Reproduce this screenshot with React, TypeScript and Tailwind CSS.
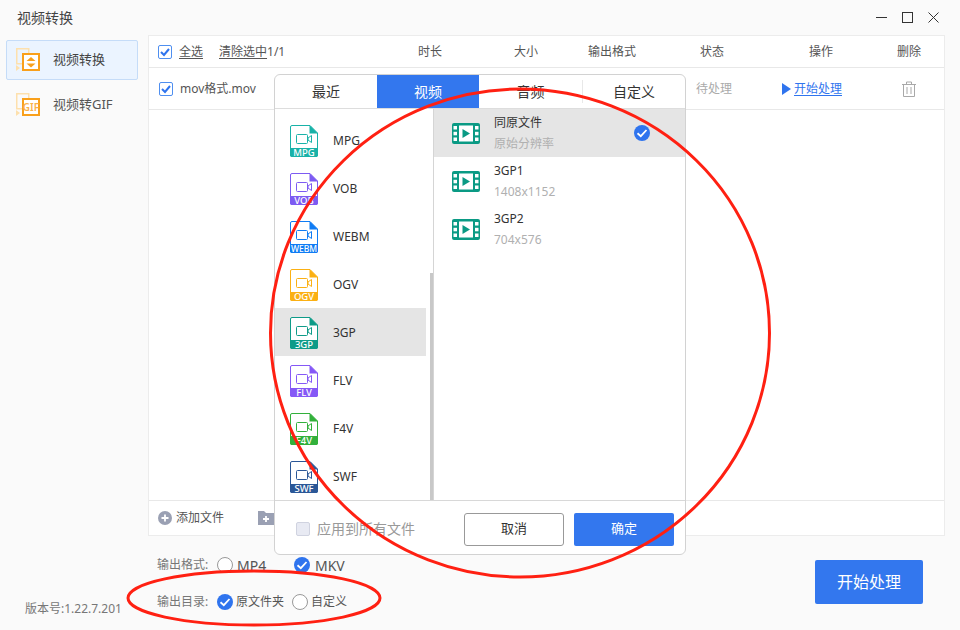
const fontStack = `font-['Noto_Sans','Noto_Sans_CJK_SC',sans-serif]`;

const formats = [
  { name: "MPG", color: "#19b2a8" },
  { name: "VOB", color: "#7d5bf2" },
  { name: "WEBM", color: "#0f7cf4" },
  { name: "OGV", color: "#fbb013" },
  { name: "3GP", color: "#0e9b88", active: true },
  { name: "FLV", color: "#8558f6" },
  { name: "F4V", color: "#32b03b" },
  { name: "SWF", color: "#2b5797" },
];

const presets = [
  { title: "同原文件", sub: "原始分辨率", selected: true },
  { title: "3GP1", sub: "1408x1152" },
  { title: "3GP2", sub: "704x576" },
];

const FileIcon = ({ name, color }: { name: string; color: string }) => (
  <svg width="28" height="32" viewBox="0 0 28 32" className="shrink-0">
    <path d="M2 .5H20L27.5 8V30A1.5 1.5 0 0 1 26 31.5H2A1.5 1.5 0 0 1 .5 30V2A1.5 1.5 0 0 1 2 .5Z" fill="#fff" stroke={color} />
    <path d="M19.5 0L28 8.5H19.5Z" fill={color} />
    <path d="M0 23H28V30A2 2 0 0 1 26 32H2A2 2 0 0 1 0 30Z" fill={color} />
    <rect x="6.5" y="9.5" width="11" height="9" rx="1" fill="none" stroke={color} />
    <path d="M18 13L21.5 10.5V17.5L18 15Z" fill="none" stroke={color} />
    <text x="14" y="30.5" textAnchor="middle" fontSize={name.length > 3 ? 8.5 : 9.5} fontWeight="500" fill="#fff" fontFamily="Noto Sans">
      {name}
    </text>
  </svg>
);

const FilmIcon = () => (
  <svg width="28" height="21" viewBox="0 0 28 21" className="shrink-0">
    <rect width="28" height="21" rx="2" fill="#0a9a84" />
    <rect x="7" y="2.5" width="14" height="16" fill="#fff" />
    <path d="M10.5 6L18 10.500L10.500 15Z" fill="#0a9a84" />
    <rect x="1.500" y="3" width="3.500" height="3.500" fill="#fff" />
    <rect x="1.500" y="8.800" width="3.500" height="3.500" fill="#fff" />
    <rect x="1.500" y="14.500" width="3.500" height="3.500" fill="#fff" />
    <rect x="23" y="3" width="3.500" height="3.500" fill="#fff" />
    <rect x="23" y="8.800" width="3.500" height="3.500" fill="#fff" />
    <rect x="23" y="14.500" width="3.500" height="3.500" fill="#fff" />
  </svg>
);

const CheckBox = () => (
  <span className="flex w-[14px] h-[14px] shrink-0 items-center justify-center bg-white border border-[#4f8ff0] rounded-[2px]">
    <svg width="10" height="10" viewBox="0 0 10 10">
      <path d="M1 5L4 8L9 2" fill="none" stroke="#2f74ee" strokeWidth="2" />
    </svg>
  </span>
);

const Radio = ({ checked }: { checked?: boolean }) =>
  checked ? (
    <svg width="16" height="16" viewBox="0 0 16 16" className="shrink-0">
      <circle cx="8" cy="8" r="8" fill="#2f74ee" />
      <path d="M3.500 8.300L6.800 11.200L12.500 5" fill="none" stroke="#fff" strokeWidth="1.800" />
    </svg>
  ) : (
    <span className="w-[16px] h-[16px] shrink-0 rounded-full bg-white border border-[#999]" />
  );

const SideIcon = ({ gif }: { gif?: boolean }) => (
  <svg width="24" height="24" viewBox="0 0 24 24" className="shrink-0">
    <rect x=".75" y=".75" width="12" height="15" fill="none" stroke="#fde0ad" strokeWidth="1.500" />
    <path d="M0 17L4 20L0 23Z" fill="#fde0ad" />
    <rect x="7" y="6" width="16" height="16" fill="#fff" stroke="#f9a01b" strokeWidth="2" />
    {gif ? (
      <text x="15" y="18" textAnchor="middle" fontSize="10" fontWeight="600" fill="#f9b04a" fontFamily="Noto Sans">
        GIF
      </text>
    ) : (
      <>
        <path d="M15 9L19.500 13H10.500ZM15 19.500L10.500 15.500H19.500Z" fill="#f9a01b" />
      </>
    )}
  </svg>
);

const tableCols = "grid grid-cols-[228px_106px_86px_86px_114px_104px_72px] items-center";

export default function App() {
  return (
    <div className={`relative w-[960px] h-[630px] overflow-hidden bg-[#fafafa] flex flex-col text-[#555] ${fontStack}`}>
      {/* title bar */}
      <div className="h-[35px] shrink-0 flex items-center justify-between pl-[17px] pr-[21px]">
        <span className="text-[14px] text-[#444]">视频转换</span>
        <div className="flex items-center gap-[15px]">
          <span className="w-[11px] h-[1px] bg-[#333]" />
          <span className="w-[11px] h-[11px] border border-[#333]" />
          <svg width="11" height="11" viewBox="0 0 11 11">
            <path d="M.5 .5L10.500 10.500M10.500 .5L.5 10.500" stroke="#333" fill="none" />
          </svg>
        </div>
      </div>

      <div className="flex h-[501px] shrink-0">
        {/* sidebar */}
        <div className="w-[148px] shrink-0 pl-[6px] pr-[10px] pt-[5px] flex flex-col gap-[5px]">
          <div className="h-[40px] flex items-center gap-[13px] pl-[9px] bg-[#ebf4ff] border border-[#c5dcf8] rounded-[2px]">
            <SideIcon />
            <span className="text-[13px] text-[#444]">视频转换</span>
          </div>
          <div className="h-[40px] flex items-center gap-[13px] pl-[10px]">
            <SideIcon gif />
            <span className="text-[13px] text-[#555]">视频转GIF</span>
          </div>
        </div>

        {/* table */}
        <div className="w-[797px] shrink-0 flex flex-col bg-white border border-[#ececec] text-[12px]">
          <div className={`h-[32px] shrink-0 border-b border-[#e8e8e8] ${tableCols}`}>
            <div className="flex items-center pl-[9px]">
              <CheckBox />
              <span className="ml-[7px] underline underline-offset-2">全选</span>
              <span className="ml-[16px] underline underline-offset-2">清除选中</span>
              <span>1/1</span>
            </div>
            <span className="text-center">时长</span>
            <span className="text-center">大小</span>
            <span className="text-center">输出格式</span>
            <span className="text-center">状态</span>
            <span className="text-center">操作</span>
            <span className="text-center">删除</span>
          </div>
          <div className={`h-[42px] shrink-0 border-b border-[#e8e8e8] ${tableCols}`}>
            <div className="flex items-center pl-[10px]">
              <CheckBox />
              <span className="ml-[7px] text-[12px]">mov格式.mov</span>
            </div>
            <span />
            <span />
            <span />
            <span className="text-center pl-[4px] text-[#aaa]">待处理</span>
            <div className="flex items-center justify-center pr-[18px]">
              <svg width="9" height="12" viewBox="0 0 9 12" className="mr-[3px]">
                <path d="M0 0L9 6L0 12Z" fill="#2f74ee" />
              </svg>
              <span className="text-[#2f74ee] underline underline-offset-2">开始处理</span>
            </div>
            <div className="flex justify-center">
              <svg width="16" height="16" viewBox="0 0 16 16">
                <path d="M1 3.500H15M5.500 3V1H10.500V3M2.500 3.500V15.500H13.500V3.500M6 6V13M10 6V13" fill="none" stroke="#a8a8a8" />
              </svg>
            </div>
          </div>
          <div className="flex-1" />
          <div className="h-[35px] shrink-0 border-t border-[#e8e8e8] flex items-center pl-[9px]">
            <svg width="14" height="14" viewBox="0 0 14 14">
              <circle cx="7" cy="7" r="7" fill="#9aa0b3" />
              <path d="M7 3.500V10.500M3.500 7H10.500" stroke="#fff" strokeWidth="1.800" />
            </svg>
            <span className="ml-[4px]">添加文件</span>
            <svg width="16" height="14" viewBox="0 0 16 14" className="ml-[34px]">
              <path d="M0 0H6L8 2H16V14H0Z" fill="#9aa0b3" />
              <path d="M8 5V11M5 8H11" stroke="#fff" strokeWidth="1.800" />
            </svg>
          </div>
        </div>
      </div>

      {/* bottom options */}
      <div className="relative flex-1 flex text-[12px]">
        <div className="w-[157px] shrink-0 flex flex-col justify-end pb-[12px] pl-[25px] text-[#777]">
          <span className="whitespace-nowrap">版本号:1.22.7.201</span>
        </div>
        <div className="flex flex-col pt-[21px] gap-[21px]">
          <div className="h-[16px] flex items-center">
            <span className="w-[60px] text-[#777]">输出格式:</span>
            <Radio />
            <span className="ml-[4px] w-[57px] text-[14px]">MP4</span>
            <Radio checked />
            <span className="ml-[5px] text-[14px]">MKV</span>
          </div>
          <div className="h-[16px] flex items-center">
            <span className="w-[60px] text-[#777]">输出目录:</span>
            <Radio checked />
            <span className="ml-[3px] w-[56px]">原文件夹</span>
            <Radio />
            <span className="ml-[3px]">自定义</span>
          </div>
        </div>
        <div className="ml-auto mr-[37px] mt-[24px] w-[108px] h-[44px] flex items-center justify-center bg-[#3377ee] rounded-[2px] text-white text-[16px]">
          开始处理
        </div>
      </div>

      {/* format popover */}
      <div className="absolute left-[274px] top-[74px] w-[412px] h-[481px] flex flex-col bg-white border border-[#d2d2d2] rounded-[6px] overflow-hidden">
        <div className="h-[34px] shrink-0 flex text-[14px] text-[#333] border-b border-[#ddd]">
          <div className="w-[102px] flex items-center justify-center">最近</div>
          <div className="w-[102px] flex items-center justify-center bg-[#3377ee] text-white">视频</div>
          <div className="w-[104px] flex items-center justify-center border-r border-[#e8e8e8] my-[5px]">音频</div>
          <div className="flex-1 flex items-center justify-center">自定义</div>
        </div>
        <div className="flex-1 min-h-0 flex">
          <div className="relative w-[159px] shrink-0 border-r border-[#d5d5d5] pt-[7px]">
            {formats.map((f) => (
              <div
                key={f.name}
                className={`h-[48px] w-[151px] flex items-center pl-[15px] pt-[2px] gap-[15px] text-[12px] text-[#333] ${f.active ? "bg-[#e5e5e5]" : ""}`}
              >
                <FileIcon name={f.name} color={f.color} />
                <span>{f.name}</span>
              </div>
            ))}
            <span className="absolute right-0 top-[164px] bottom-0 w-[3px] bg-[#c8c8c8]" />
          </div>
          <div className="flex-1">
            {presets.map((p) => (
              <div
                key={p.title}
                className={`h-[48px] flex items-center pl-[18px] pr-[35px] text-[12px] ${p.selected ? "bg-[#e5e5e5]" : ""}`}
              >
                <FilmIcon />
                <div className="ml-[14px] flex-1 flex flex-col gap-[4px] leading-[17px]">
                  <span className="text-[#333]">{p.title}</span>
                  <span className="text-[#b0b0b0]">{p.sub}</span>
                </div>
                {p.selected && <Radio checked />}
              </div>
            ))}
          </div>
        </div>
        <div className="h-[54px] shrink-0 border-t border-[#d8d8d8] flex items-center pl-[21px] pr-[11px] pt-[3px]">
          <span className="w-[14px] h-[14px] bg-[#e8eaf3] border border-[#d0d3e0] rounded-[2px]" />
          <span className="ml-[7px] mb-[2px] text-[14px] text-[#999] flex-1">应用到所有文件</span>
          <div className="w-[100px] h-[33px] flex items-center justify-center border border-[#999] rounded-[3px] text-[13px] text-[#333]">取消</div>
          <div className="ml-[10px] w-[100px] h-[33px] flex items-center justify-center bg-[#3377ee] rounded-[2px] text-[13px] text-white">确定</div>
        </div>
      </div>

      {/* red annotations */}
      <svg width="960" height="630" viewBox="0 0 960 630" className="absolute left-0 top-0 pointer-events-none">
        <ellipse cx="520" cy="333" rx="249.500" ry="244" fill="none" stroke="#ff2012" strokeWidth="3" />
        <ellipse cx="254" cy="598" rx="126" ry="27" fill="none" stroke="#ff2012" strokeWidth="3" />
      </svg>
    </div>
  );
}
